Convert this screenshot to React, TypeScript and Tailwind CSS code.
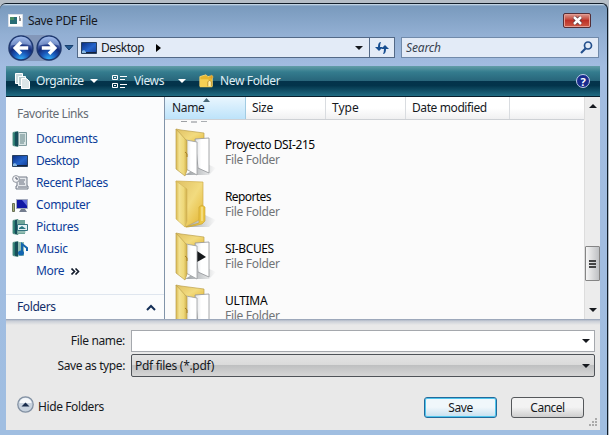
import React from 'react';

type LinkKind = 'documents' | 'desktop' | 'recent' | 'computer' | 'pictures' | 'music';

function Arrow({ className = '' }: { className?: string }) {
  return (
    <svg width="8" height="4" viewBox="0 0 8 4" className={`shrink-0 ${className}`} fill="currentColor">
      <path d="M0 0h8L4 4z" />
    </svg>
  );
}

function MonitorIcon() {
  return (
    <svg width="16" height="12" viewBox="0 0 16 12" className="shrink-0">
      <defs>
        <linearGradient id="screen" x1="0" x2="1" y1="0" y2="1">
          <stop stopColor="#082b80" />
          <stop offset=".55" stopColor="#2565cc" />
          <stop offset="1" stopColor="#123a91" />
        </linearGradient>
      </defs>
      <path d="M.5.5h15v11H.5z" fill="url(#screen)" stroke="#28405f" />
      <path d="M1 10h14v1H1z" fill="#15233d" />
      <path d="M1 9l2-1 2 2v1H1z" fill="#85b5df" />
    </svg>
  );
}

function LinkIcon({ kind }: { kind: LinkKind }) {
  if (kind === 'desktop') return <MonitorIcon />;
  if (kind === 'recent')
    return (
      <svg width="17" height="16" viewBox="0 0 17 16" className="shrink-0">
        <path d="M5 2h10v9h1v3H4v-3h1z" fill="#e4e7eb" stroke="#757c89" />
        <path d="M7 5h6M7 7h5M7 9h6M6 12h9" stroke="#68717f" />
        <circle cx="4" cy="4" r="3.4" fill="#f5f5f7" stroke="#9298a1" />
        <path d="M4 2v2h2" fill="none" stroke="#4e5869" />
      </svg>
    );
  if (kind === 'computer')
    return (
      <svg width="17" height="15" viewBox="0 0 17 15" className="shrink-0">
        <path d="M.5 5.5h2v8h-2z" fill="#a3ad75" stroke="#697156" />
        <path d="M4.5 1.5h11v9h-11z" fill="#1017a5" stroke="#a2a9bb" />
        <path d="M10 2h5v6z" fill="#606bdc" />
        <path d="M9 11h4l2 3H7z" fill="#747d8f" />
      </svg>
    );
  return (
    <svg width="16" height="16" viewBox="0 0 16 16" className="shrink-0">
      <path d="M1 1.5L6 .5v15l-5-1z" fill="#267b70" stroke="#579187" />
      <path d="M3 1h3v14H3z" fill="#174d5a" />
      {kind === 'documents' && (
        <>
          <path d="M6.5 1.5h8v13h-8z" fill="#d7e4e4" stroke="#829c9f" />
          <path d="M8 4h5M8 6h5M8 8h5M8 10h5M8 12h4" stroke="#658487" />
        </>
      )}
      {kind === 'pictures' && (
        <>
          <path d="M5 1h8v14H5z" fill="#71a69b" />
          <path d="M5.5 5.5h10v6h-10z" fill="#e4f1f3" stroke="#357480" />
          <path d="M7 9l3-2 4 3H7z" fill="#2b7682" />
          <path d="M6 13h8" stroke="#b3d1ca" />
        </>
      )}
      {kind === 'music' && (
        <>
          <path d="M6 1h6v14H6z" fill="#8ebcaf" />
          <path d="M10 11V3l5 4v3" fill="none" stroke="#1464ad" strokeWidth="2" />
          <ellipse cx="9" cy="12" rx="3" ry="2.5" fill="#1265b0" />
        </>
      )}
    </svg>
  );
}

function FolderIcon({ content }: { content: 'papers' | 'closed' | 'media' }) {
  return (
    <svg width="42" height="50" viewBox="0 0 42 50" className="shrink-0">
      <defs>
        <linearGradient id="folderFront" x1="0" x2="1">
          <stop stopColor="#d9b951" />
          <stop offset=".3" stopColor="#f3e292" />
          <stop offset=".7" stopColor="#eed879" />
          <stop offset="1" stopColor="#cfae49" />
        </linearGradient>
        <linearGradient id="folderBack" x1="0" x2="1" y1="0" y2="1">
          <stop stopColor="#dfc063" />
          <stop offset=".5" stopColor="#f2db7f" />
          <stop offset="1" stopColor="#e3b32c" />
        </linearGradient>
        <linearGradient id="paper" x1="0" x2="1">
          <stop stopColor="#dfe1e4" />
          <stop offset=".45" stopColor="#ffffff" />
        </linearGradient>
        <linearGradient id="folderShadow" x1="0" x2="1">
          <stop stopColor="#70777c" stopOpacity=".7" />
          <stop offset="1" stopColor="#70777c" stopOpacity="0" />
        </linearGradient>
      </defs>
      <path d="M10 47L30 35l11 5-7 7z" fill="url(#folderShadow)" />
      {content === 'closed' ? (
        <>
          <path d="M1 1l27 1v36l-18 9z" fill="url(#folderBack)" stroke="#d0ae4b" strokeWidth=".7" />
          <path d="M11 47l13-4V27l3-2 3 2v14l-3 3-14 3z" fill="#ebc544" stroke="#c89f28" strokeWidth=".6" />
          <path d="M27 27v14" stroke="#f8e9a2" strokeWidth="1.2" />
          <path d="M1 1l11 8v32l-2 6-9-8z" fill="url(#folderFront)" stroke="#d0b45a" strokeWidth=".6" />
        </>
      ) : (
        <>
          <path d="M1 1l5 1 23 3v10l-18 3z" fill="url(#folderBack)" stroke="#bba04d" strokeWidth=".7" />
          <path d="M20 11l14-1v35l-11-5z" fill="url(#paper)" stroke="#8f9295" strokeWidth=".8" />
          {content === 'media' && <path d="M22 19l9 6-9 5z" fill="#17191c" />}
          <path d="M11 12l11 2v33l-11-6z" fill="url(#paper)" stroke="#9b9d9e" strokeWidth=".8" />
          <path d="M1 1l11 12v29l-2 6-9-7z" fill="url(#folderFront)" stroke="#bba04d" strokeWidth=".7" />
          <path d="M10 24q3 1 2 5" fill="none" stroke="#a47c20" />
        </>
      )}
    </svg>
  );
}

function RoundArrow({ forward = false }: { forward?: boolean }) {
  return (
    <svg width="26" height="26" viewBox="0 0 27 27" className="shrink-0">
      <defs>
        <radialGradient id="navOrb" cx=".5" cy="1" r=".95">
          <stop stopColor="#35b9ff" />
          <stop offset=".35" stopColor="#1a57b8" />
          <stop offset=".6" stopColor="#122b78" />
          <stop offset="1" stopColor="#8ba7e3" />
        </radialGradient>
      </defs>
      <circle cx="13.5" cy="13.5" r="12.4" fill="url(#navOrb)" stroke="#1d3870" strokeWidth="1.5" />
      <path d="M3 11a10.5 9.5 0 0121 0q-8-3-21 0z" fill="#acc5ed" opacity=".5" />
      <path
        d="M21 13.5H8m5.5-6l-6 6 6 6"
        fill="none"
        stroke="#fff"
        strokeWidth="3.6"
        transform={forward ? 'rotate(180 13.5 13.5)' : undefined}
      />
    </svg>
  );
}

function TitleBar() {
  return (
    <header className="flex h-8 shrink-0 items-center pl-2 pr-[9px] pt-px">
      <svg width="15" height="13" viewBox="0 0 15 13" className="shrink-0">
        <path d="M.5.5h14v12H.5z" fill="#fff" stroke="#d9e0e8" />
        <path d="M2 3h7v7H2z" fill="#286d76" />
        <path d="M2 3h4v3H2z" fill="#4b8d62" />
        <path d="M11 3h1M12 4v3" stroke="#222" />
      </svg>
      <span className="ml-[5px] tracking-[-0.35px]">Save PDF File</span>
      <button className="ml-auto flex h-[15px] w-7 items-center justify-center rounded-[2px] border border-[#542e36] bg-linear-to-b from-[#d99b93] via-[#bd3027] via-50% to-[#cd5845] shadow-[inset_0_0_0_1px_#e59b91]">
        <svg width="11" height="9" viewBox="0 0 11 9">
          <path d="M2 1l7 7m0-7L2 8" stroke="#5c353c" strokeWidth="4" />
          <path d="M2 1l7 7m0-7L2 8" stroke="#fff" strokeWidth="2.5" />
        </svg>
      </button>
    </header>
  );
}

function NavBar() {
  return (
    <div className="flex h-[30px] shrink-0 items-start pl-2 pr-px pt-px">
      <div className="-mt-[2px] flex gap-[2px] rounded-full bg-[#8397b9]">
        <RoundArrow />
        <RoundArrow forward />
      </div>
      <svg width="10" height="6" viewBox="0 0 10 6" className="ml-[2px] mt-2 shrink-0">
        <path d="M1 .5h8L5 5z" fill="#245a91" stroke="#173f6e" />
      </svg>
      <div className="ml-[3px] flex h-[21px] w-[318px] shrink-0 items-center border border-[#536987] bg-[#e3ebf7] pl-[3px]">
        <MonitorIcon />
        <span className="ml-[4px] tracking-[-0.5px]">Desktop</span>
        <svg width="5" height="8" viewBox="0 0 5 8" className="ml-3">
          <path d="M0 0l5 4-5 4z" />
        </svg>
        <Arrow className="ml-auto mr-1.5" />
        <div className="flex h-[19px] w-[25px] items-center justify-center border-l border-[#536987]">
          <svg width="14" height="14" viewBox="0 0 14 14" fill="#174e91">
            <path d="M6 1Q3 1 3 6H0l4 4 4-4H5q0-3 1-5z" />
            <path d="M8 13q3 0 3-5h3l-4-4-4 4h3q0 3-1 5z" />
          </svg>
        </div>
      </div>
      <div className="ml-[6px] flex h-[21px] grow items-center border border-[#718aaa] bg-[#e3ebf7] pl-1 pr-[5px] text-[#384250]">
        <span className="italic tracking-[-0.15px]">Search</span>
        <svg width="13" height="13" viewBox="0 0 13 13" className="ml-auto" fill="none" stroke="#234f8c">
          <circle cx="8" cy="4.5" r="3.5" strokeWidth="1.7" />
          <path d="M5.5 7.5L1 12" strokeWidth="2.2" />
        </svg>
      </div>
    </div>
  );
}

function Toolbar() {
  return (
    <div className="flex h-[31px] shrink-0 items-center border-b border-[#071d2b] bg-[linear-gradient(to_bottom,#639da9_0,#347c8e_20%,#28667b_49%,#04334b_50%,#03344b_65%,#216c83_100%)] pl-[9px] pr-[10px] text-[#deedf4]">
      <svg width="15" height="16" viewBox="0 0 15 16" className="shrink-0">
        <path d="M.5.5h7v10h-7z" fill="#c9d9dd" stroke="#fff" />
        <path d="M3.5 3.5h7v9h-7z" fill="#bacdd1" stroke="#f6ffff" />
        <path d="M6.5 5.5h5l3 3v7h-8z" fill="#dbe6e8" stroke="#fff" />
      </svg>
      <span className="ml-[6px] w-[48px] whitespace-nowrap tracking-[-0.45px]">Organize</span>
      <Arrow className="ml-[6px] text-white" />
      <svg width="15" height="15" viewBox="0 0 15 15" className="ml-[14px] shrink-0" fill="none" stroke="#fff">
        <path d="M.5 1.5h5v4h-5zM.5 9.5h5v4h-5zM8 2.5h7M8 5.5h5M8 10.5h7M8 13.5h5M2 3.5h2M2 11.5h2" />
      </svg>
      <span className="ml-[7px] w-[30px] whitespace-nowrap tracking-[-0.4px]">Views</span>
      <Arrow className="ml-[14px] text-white" />
      <svg width="15" height="16" viewBox="0 0 17 16" className="ml-[13px] shrink-0">
        <path d="M1 3l7-2 2 2 5-1v12H1z" fill="#e8b72e" stroke="#f5d677" />
        <path d="M1 6h9l5 3v6H1z" fill="#f5cf54" />
        <path d="M10 14V9l2-2 2 2v5" fill="#fff0ad" stroke="#b88c26" />
        <path d="M14 1v5M11.5 3.5h5" stroke="#e29d20" />
      </svg>
      <span className="ml-[6px] tracking-[-0.35px]">New Folder</span>
      <span className="ml-auto flex size-[14px] items-center justify-center rounded-full border border-[#c0cce9] bg-[#182b8e] text-[11px] font-bold leading-none text-white">?</span>
    </div>
  );
}

const links: { label: string; kind: LinkKind; tracking: string }[] = [
  { label: 'Documents', kind: 'documents', tracking: 'tracking-[-0.35px]' },
  { label: 'Desktop', kind: 'desktop', tracking: 'tracking-[-0.5px]' },
  { label: 'Recent Places', kind: 'recent', tracking: 'tracking-[-0.4px]' },
  { label: 'Computer', kind: 'computer', tracking: 'tracking-[-0.35px]' },
  { label: 'Pictures', kind: 'pictures', tracking: 'tracking-[-0.3px]' },
  { label: 'Music', kind: 'music', tracking: 'tracking-[-0.2px]' },
];

function Sidebar() {
  return (
    <aside className="flex w-[159px] shrink-0 flex-col border-r border-[#8194a9] bg-[#fbfcfd] text-[#0c3c99]">
      <h2 className="flex h-[31px] shrink-0 items-center pl-[11px] pt-[3px] tracking-[-0.45px] text-[#666c74]">Favorite Links</h2>
      {links.map((link) => (
        <div key={link.kind} className="flex h-[22px] shrink-0 items-center pl-1.5">
          <span className="flex w-6 shrink-0 items-center"><LinkIcon kind={link.kind} /></span>
          <span className={link.tracking}>{link.label}</span>
        </div>
      ))}
      <div className="flex h-[22px] shrink-0 items-center pl-[30px]">
        <span className="tracking-[-0.35px]">More</span>
        <svg width="9" height="7" viewBox="0 0 9 7" className="ml-[7px]" fill="none" stroke="#111a2a" strokeWidth="1.6">
          <path d="M.5.5l3 3-3 3m4-6l3 3-3 3" />
        </svg>
      </div>
      <div className="mt-auto flex h-[25px] shrink-0 items-center border-t border-[#dfe6ef] pl-[11px] pr-2">
        <span className="tracking-[-0.4px] text-[#122d69]">Folders</span>
        <svg width="10" height="7" viewBox="0 0 10 7" className="ml-auto" fill="none" stroke="#142f57" strokeWidth="2">
          <path d="M1 6l4-4 4 4" />
        </svg>
      </div>
    </aside>
  );
}

const files = [
  { name: 'Proyecto DSI-215', content: 'papers', tracking: 'tracking-[-0.4px]' },
  { name: 'Reportes', content: 'closed', tracking: 'tracking-[-0.6px]' },
  { name: 'SI-BCUES', content: 'media', tracking: 'tracking-[-0.4px]' },
  { name: 'ULTIMA', content: 'papers', tracking: 'tracking-[-0.3px]' },
] as const;

function FileList() {
  return (
    <main className="flex min-w-0 grow flex-col overflow-hidden bg-[#fbfbfb]">
      <div className="flex h-[23px] shrink-0 border-b border-[#ced1d5] bg-linear-to-b from-white from-50% to-[#f0f0f1]">
        <div className="relative flex w-[81px] items-center border-r border-[#a1cbe2] bg-linear-to-b from-[#e9f6fe] to-[#bde3fa] pl-[7px] tracking-[-0.35px]">
          Name
          <svg width="7" height="4" viewBox="0 0 7 4" className="absolute left-[38px] top-px"><path d="M0 4l3.5-4L7 4z" fill="#486777" /></svg>
        </div>
        <div className="flex w-20 items-center border-r border-[#d9dce0] pl-[6px] tracking-[-0.3px]">Size</div>
        <div className="flex w-20 items-center border-r border-[#d9dce0] pl-[6px]">Type</div>
        <div className="flex w-[104px] items-center border-r border-[#d9dce0] pl-[6px] tracking-[-0.4px]">Date modified</div>
      </div>
      <div className="flex h-2 shrink-0 items-start gap-1 pl-4 pt-px">
        <span className="h-px w-1.5 bg-[#9da0a4]" />
        <span className="h-0.5 w-1.5 bg-[#bfc1c4]" />
        <span className="h-px w-1.5 bg-[#aaaeb2]" />
      </div>
      {files.map((file) => (
        <div key={file.name} className="flex h-[52px] shrink-0 items-start pl-[10px]">
          <FolderIcon content={file.content} />
          <div className="ml-2 flex flex-col pt-[9px] leading-[15px]">
            <span className={`text-[#050505] ${file.tracking}`}>{file.name}</span>
            <span className="tracking-[-0.3px] text-[#717477]">File Folder</span>
          </div>
        </div>
      ))}
    </main>
  );
}

function ScrollBar() {
  return (
    <div className="flex w-4 shrink-0 flex-col items-center border-l border-[#ddd] bg-[#ececec] py-[7px]">
      <Arrow className="rotate-180" />
      <div className="mt-[138px] flex h-[35px] w-[15px] shrink-0 flex-col items-center justify-center gap-px rounded-[1px] border border-[#858585] bg-linear-to-r from-[#f5f5f5] to-[#bfc1c4]">
        <span className="h-0.5 w-[7px] bg-[#444]" />
        <span className="h-0.5 w-[7px] bg-[#444]" />
        <span className="h-0.5 w-[7px] bg-[#444]" />
      </div>
      <Arrow className="mt-auto" />
    </div>
  );
}

function SaveForm() {
  return (
    <form className="flex h-[111px] shrink-0 flex-col bg-[#e9e9e9] bg-[linear-gradient(to_bottom,#8f9cb2_0,#c9ced7_2px,#e9e9e9_6px)] pt-[10px]">
      <div className="flex h-[23px] shrink-0 items-center pr-[5px]">
        <label className="w-[119px] text-right tracking-[-0.35px]">File name:</label>
        <div className="ml-[6px] flex h-[22px] grow items-center border border-[#a5a8ad] bg-white pr-1"><Arrow className="ml-auto" /></div>
      </div>
      <div className="mt-[2px] flex h-[23px] shrink-0 items-center pr-[5px]">
        <label className="w-[119px] text-right tracking-[-0.4px]">Save as type:</label>
        <div className="ml-[6px] flex h-[23px] grow items-center rounded-[2px] border border-[#4f5358] bg-[linear-gradient(to_bottom,#e4e4e4_0,#dadada_49%,#bfc0c1_50%,#d6d6d6_100%)] pl-[3px] pr-1">
          <span className="tracking-[-0.3px]">Pdf files (*.pdf)</span>
          <Arrow className="ml-auto" />
        </div>
      </div>
      <div className="mt-4 flex h-8 shrink-0 items-start pl-[11px] pr-4">
        <svg width="17" height="17" viewBox="0 0 17 17" className="mt-[3px] shrink-0">
          <circle cx="8.5" cy="8.5" r="7.7" fill="#c8d3df" stroke="#8391a3" strokeWidth="1.3" />
          <path d="M2.5 7a6 5 0 0112 0z" fill="#f5f8fb" />
          <path d="M4.5 10.5l4-4 4 4z" fill="#182c4d" />
        </svg>
        <span className="ml-1 mt-[6px] tracking-[-0.4px]">Hide Folders</span>
        <button type="button" className="ml-auto mt-1 flex h-[21px] w-[73px] items-center justify-center rounded-[3px] border border-[#226a9c] bg-linear-to-b from-[#f0f7fb] from-48% to-[#c5dfef] tracking-[-0.4px] shadow-[inset_0_0_0_1px_#50c5ec]">Save</button>
        <button type="button" className="ml-[14px] mt-1 flex h-[21px] w-[73px] items-center justify-center rounded-[3px] border border-[#55585b] bg-linear-to-b from-[#f3f3f3] from-48% to-[#cecece] tracking-[-0.5px]">Cancel</button>
      </div>
      <svg width="9" height="9" viewBox="0 0 9 9" className="-mt-[7px] ml-auto mr-[2px] shrink-0" fill="#aaa">
        <path d="M6 0h2v2H6zM3 3h2v2H3zM6 3h2v2H6zM0 6h2v2H0zM3 6h2v2H3zM6 6h2v2H6z" />
      </svg>
    </form>
  );
}

export default function App() {
  return (
    <div className="h-[435px] w-[609px] overflow-hidden bg-[#b5bec7] pt-[3px] font-['Noto_Sans','Open_Sans',sans-serif] text-[12px] leading-4 text-[#16191e]">
      <div className="flex h-[432px] w-[608px] flex-col rounded-t-[6px] border-r border-t border-[#111e2a] bg-[linear-gradient(to_bottom,#d6e4ef_0,#799abd_2px,#92afd3_30px,#a2bce1_62px,#a0bee1_100%)] pr-[7px]">
        <TitleBar />
        <NavBar />
        <div className="ml-1.5 flex h-[364px] shrink-0 flex-col">
          <Toolbar />
          <div className="flex h-[222px] shrink-0">
            <Sidebar />
            <FileList />
            <ScrollBar />
          </div>
          <SaveForm />
        </div>
      </div>
    </div>
  );
}
